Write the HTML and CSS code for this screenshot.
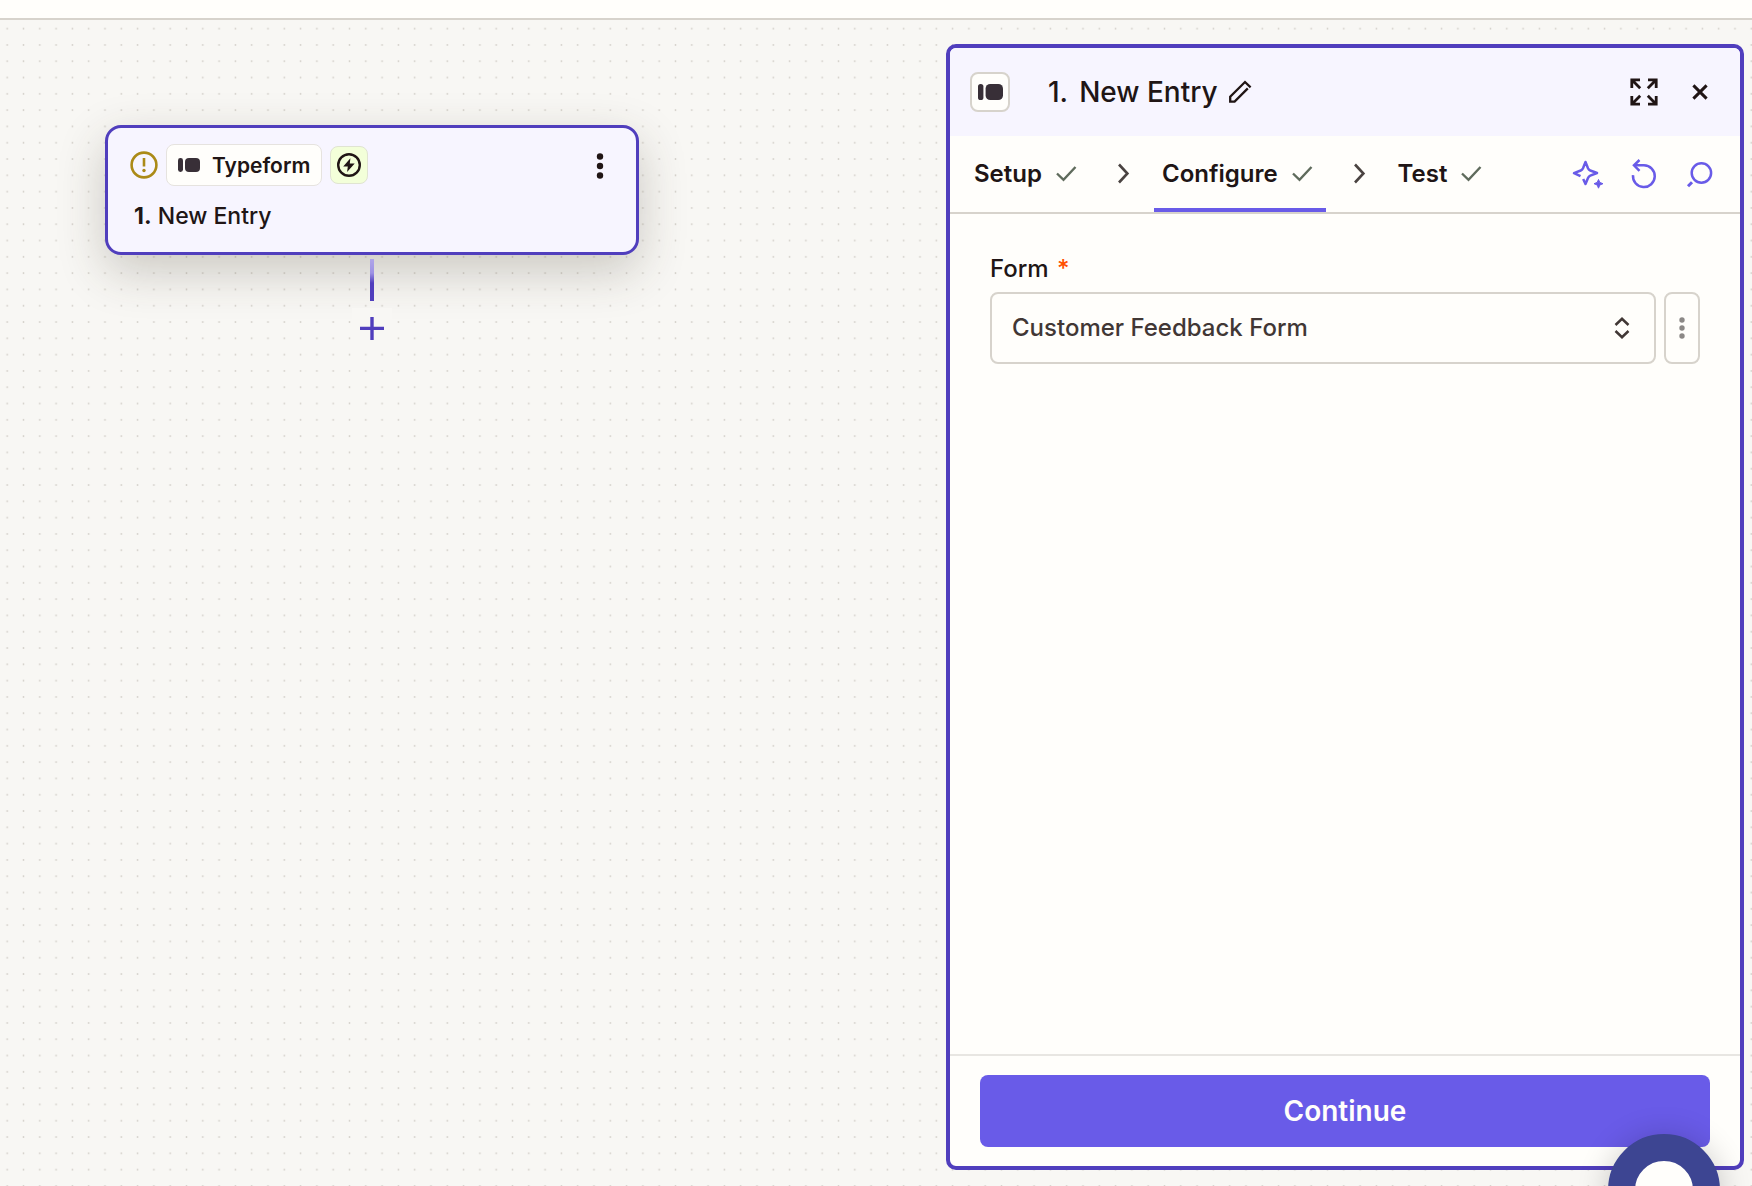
FILE: index.html
```html
<!DOCTYPE html>
<html lang="en">
<head>
  <meta charset="UTF-8">
  <meta name="viewport" content="width=device-width, initial-scale=1.0">
  <title>New Entry</title>
  <link rel="stylesheet" href="styles.css">
</head>
<body>

  <header class="topbar"></header>

  <main class="editor">
    <svg class="dots" aria-hidden="true">
      <pattern id="dot-grid" width="16.3" height="16.3" patternUnits="userSpaceOnUse">
        <circle cx="7.2" cy="8.6" r="0.9" fill="#d3d0ca"/>
      </pattern>
      <rect width="100%" height="100%" fill="url(#dot-grid)"/>
    </svg>

    <section class="canvas">
      <div class="flow">
        <article class="step">
          <div class="step-top">
            <svg class="icon-alert" viewBox="0 0 28 28" fill="none" stroke="#ab8a17" stroke-width="2.6">
              <circle cx="14" cy="14" r="12.4"/>
              <path d="M14 7v8.5"/>
              <circle cx="14" cy="19.5" r="1.7" fill="#ab8a17" stroke="none"/>
            </svg>
            <span class="app">
              <svg class="app-logo" viewBox="0 0 22 14" fill="#382f37">
                <rect x="0" y="0" width="5" height="14" rx="2.4"/>
                <rect x="7" y="0" width="15" height="14" rx="4"/>
              </svg>
              Typeform
            </span>
            <span class="trigger">
              <svg class="icon-bolt" viewBox="0 0 24 24">
                <circle cx="12" cy="12" r="10.8" fill="none" stroke="#201515" stroke-width="2.4"/>
                <path d="M13.4 5.2 6.2 13.6h4.6l-.7 5.4 7.6-8.4h-4.9z" fill="#201515"/>
              </svg>
            </span>
            <button class="step-menu" type="button" aria-label="Step menu">
              <svg class="icon-more" viewBox="0 0 8 26" fill="#201515">
                <circle cx="4" cy="3.5" r="3.2"/>
                <circle cx="4" cy="13" r="3.2"/>
                <circle cx="4" cy="22.5" r="3.2"/>
              </svg>
            </button>
          </div>
          <p class="step-name"><b>1.</b> New Entry</p>
        </article>
        <div class="connector"></div>
        <button class="add-step" type="button" aria-label="Add step">
          <svg class="icon-plus" viewBox="0 0 24 24" stroke="#503ebd" stroke-width="3.4">
            <path d="M12 1v23M0 12.4h24"/>
          </svg>
        </button>
      </div>
    </section>

    <aside class="panel">
      <header class="panel-head">
        <span class="panel-app">
          <svg class="panel-logo" viewBox="0 0 25 16" fill="#382f37">
            <rect x="0" y="0" width="5.4" height="16" rx="2.6"/>
            <rect x="7.6" y="0" width="17.4" height="16" rx="4.6"/>
          </svg>
        </span>
        <h1><span>1.</span> <span>New Entry</span></h1>
        <button class="icon-btn rename" type="button" aria-label="Rename">
          <svg class="icon" viewBox="0 0 32 32" fill="none" stroke="#201515" stroke-width="2.3">
            <path d="M23.8 12.4 10.6 25.6H6.2v-4.8L21 6l5.6 5.4"/>
          </svg>
        </button>
        <div class="tools">
          <button class="icon-btn" type="button" aria-label="Expand">
            <svg class="icon" viewBox="0 0 32 32" fill="none" stroke="#201515" stroke-width="2.8">
              <path d="M3.8 12V3.8H12M3.800 3.800l8.400 8.400M20 3.800h8.200V12M28.200 3.800l-8.400 8.400M3.800 20v8.200H12M3.800 28.200l8.400-8.400M28.200 20v8.200H20M28.200 28.200l-8.400-8.400"/>
            </svg>
          </button>
          <button class="icon-btn" type="button" aria-label="Close">
            <svg class="icon" viewBox="0 0 32 32" fill="none" stroke="#201515" stroke-width="3">
              <path d="M9.400 9.400l13.200 13.200M22.600 9.400 9.400 22.600"/>
            </svg>
          </button>
        </div>
      </header>

      <div class="tabbar">
        <nav class="tabs">
          <button class="tab" type="button">Setup
            <svg class="icon" viewBox="0 0 32 32" fill="none" stroke="#5f6b5c" stroke-width="2.4"><path d="M7 16.5l6.500 6.300L25.500 10"/></svg>
          </button>
          <svg class="sep" viewBox="0 0 32 32" fill="none" stroke="#4a4341" stroke-width="2.6"><path d="M13 6.500l8.400 9-8.400 9"/></svg>
          <button class="tab active" type="button">Configure
            <svg class="icon" viewBox="0 0 32 32" fill="none" stroke="#5f6b5c" stroke-width="2.4"><path d="M7 16.5l6.500 6.300L25.500 10"/></svg>
          </button>
          <svg class="sep" viewBox="0 0 32 32" fill="none" stroke="#4a4341" stroke-width="2.6"><path d="M13 6.500l8.400 9-8.400 9"/></svg>
          <button class="tab" type="button">Test
            <svg class="icon" viewBox="0 0 32 32" fill="none" stroke="#5f6b5c" stroke-width="2.4"><path d="M7 16.5l6.500 6.300L25.500 10"/></svg>
          </button>
        </nav>
        <div class="tools">
          <button class="icon-btn" type="button" aria-label="Copilot">
            <svg class="icon" viewBox="0 0 32 32" fill="none" stroke="#695be8" stroke-width="2.5" stroke-linejoin="round">
              <path d="M8.500 18.200 2 15.200l6.700-2.700q1.600-.7 2.300-2.300L13.500 4l2.500 6.200q.7 1.600 2.300 2.300l6.700 2.500-6.700 2.700q-1.600.7-2.300 2.300L13.500 26l-2.300-5"/>
              <path d="M26.500 21.500l1.300 2.900 3.200 1.300-3.200 1.300-1.300 3.200-1.300-3.200-3.200-1.300 3.200-1.300z" fill="#695be8" stroke="#695be8" stroke-width="1"/>
            </svg>
          </button>
          <button class="icon-btn" type="button" aria-label="Reset">
            <svg class="icon" viewBox="0 0 32 32" fill="none" stroke="#695be8" stroke-width="2.5">
              <path d="M5 17.200A10.900 10.900 0 1 0 15.900 7.300H6.500"/>
              <path d="M11.500 2 6 7.300l5.500 5.500"/>
            </svg>
          </button>
          <button class="icon-btn" type="button" aria-label="Search">
            <svg class="icon" viewBox="0 0 32 32" fill="none" stroke="#695be8" stroke-width="2.500">
              <circle cx="17.400" cy="15" r="9.700"/>
              <path d="M8 24.200l-4 4" stroke-width="3"/>
            </svg>
          </button>
        </div>
      </div>

      <form class="panel-body">
        <label for="form-select">Form <span class="required">*</span></label>
        <div class="field">
          <div class="select-wrap">
            <select id="form-select">
              <option>Customer Feedback Form</option>
            </select>
            <svg class="select-icon" viewBox="0 0 16 24" fill="none" stroke="#413735" stroke-width="2.5">
              <path d="M1.500 9 8 2.800 14.500 9M1.500 15 8 21.200 14.500 15"/>
            </svg>
          </div>
          <button class="field-menu" type="button" aria-label="Field options">
            <svg class="icon-more" viewBox="0 0 8 26" fill="#8b8886">
              <circle cx="4" cy="5" r="2.700"/>
              <circle cx="4" cy="13" r="2.700"/>
              <circle cx="4" cy="21" r="2.700"/>
            </svg>
          </button>
        </div>
      </form>

      <footer class="panel-foot">
        <button class="continue" type="button">Continue</button>
      </footer>
    </aside>
  </main>

  <button class="chat" type="button" aria-label="Help"></button>

</body>
</html>
```

FILE: styles.css
```css
* {
  box-sizing: border-box;
}
body {
  margin: 0;
  height: 100vh;
  overflow: hidden;
  display: flex;
  flex-direction: column;
  background-color: #f8f7f4;
  color: #201515;
  font-family: Inter, "Liberation Sans", sans-serif;
  font-size: 24px;
}
button {
  padding: 0;
  border: none;
  background: none;
  color: inherit;
  font: inherit;
  cursor: pointer;
}
svg {
  display: block;
  flex: none;
}

.topbar {
  flex: none;
  height: 20px;
  background-color: #fffefb;
  border-bottom: 2px solid #d7d3cc;
}
.editor {
  position: relative;
  flex: 1;
  display: flex;
  min-height: 0;
}
.dots {
  position: absolute;
  width: 100%;
  height: 100%;
}

/* canvas */
.canvas {
  position: relative;
  flex: 1;
  padding: 105px 0 0 105px;
}
.flow {
  display: flex;
  flex-direction: column;
  align-items: center;
  width: 534px;
}
.step {
  width: 100%;
  height: 130px;
  padding: 16px 22px;
  background-color: #f7f5ff;
  border: 3px solid #503ebd;
  border-radius: 16px;
  box-shadow: 0 16px 48px rgba(60, 50, 35, 0.24);
}
.step-top {
  display: flex;
  align-items: center;
  gap: 8px;
  height: 42px;
}
.icon-alert {
  width: 28px;
  height: 28px;
}
.app {
  display: flex;
  align-items: center;
  gap: 12px;
  height: 42px;
  padding: 0 11px;
  background-color: #fffefb;
  border: 1px solid #e6e3df;
  border-radius: 8px;
  font-size: 21px;
  font-weight: 600;
}
.app-logo {
  width: 22px;
  height: 14px;
}
.trigger {
  display: flex;
  align-items: center;
  justify-content: center;
  width: 38px;
  height: 38px;
  background-color: #f3ffd9;
  border: 1px solid #e0e4d2;
  border-radius: 8px;
}
.icon-bolt {
  width: 24px;
  height: 24px;
}
.step-menu {
  display: flex;
  justify-content: center;
  width: 28px;
  margin-left: auto;
  padding-top: 2px;
}
.icon-more {
  width: 8px;
  height: 26px;
}
.step-name {
  margin: 14px 4px 0;
  font-size: 23px;
  font-weight: 500;
  line-height: 32px;
}
.step-name b {
  font-weight: 700;
}
.connector {
  width: 4px;
  height: 42px;
  margin-top: 4px;
  background: linear-gradient(#b0a6e8, #9d92e4 14px, #503ebd 24px);
}
.add-step {
  display: flex;
  align-items: center;
  justify-content: center;
  width: 40px;
  height: 40px;
  margin-top: 7px;
  background-color: #f8f7f4;
}
.icon-plus {
  width: 24px;
  height: 24px;
}

/* side panel */
.panel {
  position: relative;
  flex: none;
  display: flex;
  flex-direction: column;
  width: 798px;
  margin: 24px 8px 16px 0;
  background-color: #fffefb;
  border: 4px solid #503ebd;
  border-radius: 10px;
}
.panel-head {
  display: flex;
  align-items: center;
  height: 88px;
  padding: 0 24px 0 20px;
  background-color: #f7f5ff;
  border-radius: 6px 6px 0 0;
}
.panel-app {
  display: flex;
  align-items: center;
  justify-content: center;
  width: 40px;
  height: 40px;
  background-color: #fffefb;
  border: 2px solid #d7d3cc;
  border-radius: 8px;
}
.panel-logo {
  width: 25px;
  height: 16px;
}
h1 {
  display: flex;
  gap: 11px;
  margin: 0 0 0 38px;
  font-size: 28px;
  font-weight: 500;
  line-height: 36px;
}
.rename {
  margin-left: 6px;
}
.icon-btn,
.icon {
  width: 32px;
  height: 32px;
}
.tools {
  display: flex;
  gap: 24px;
  margin-left: auto;
}
.tabbar {
  display: flex;
  align-items: center;
  height: 78px;
  padding: 0 24px 0 16px;
  border-bottom: 2px solid #d7d3cc;
}
.tabs {
  display: flex;
  align-items: center;
  height: 100%;
}
.tab {
  display: flex;
  align-items: center;
  gap: 8px;
  height: 100%;
  padding: 2px 8px 0;
  border-bottom: 4px solid transparent;
  font-weight: 600;
}
.tab.active {
  border-bottom-color: #695be8;
}
.sep {
  width: 32px;
  height: 32px;
  margin: 0 16px;
}
.panel-body {
  flex: 1;
  padding: 39px 40px;
}
label {
  display: block;
  font-weight: 500;
  line-height: 32px;
}
.required {
  margin-left: 2px;
  color: #ff4f00;
}
.field {
  display: flex;
  gap: 8px;
  margin-top: 7px;
}
.select-wrap {
  position: relative;
  flex: 1;
}
select {
  width: 100%;
  height: 72px;
  padding: 0 60px 2px 20px;
  appearance: none;
  background-color: #fffefb;
  border: 2px solid #d7d3cc;
  border-radius: 8px;
  color: #413735;
  font: inherit;
  font-weight: 500;
}
.select-icon {
  position: absolute;
  top: 24px;
  right: 26px;
  width: 16px;
  height: 24px;
  pointer-events: none;
}
.field-menu {
  display: flex;
  align-items: center;
  justify-content: center;
  width: 36px;
  border: 2px solid #d7d3cc;
  border-radius: 8px;
}
.panel-foot {
  padding: 19px 30px;
  border-top: 2px solid #e8e6e2;
}
.continue {
  width: 100%;
  height: 72px;
  display: block;
  background-color: #695be8;
  border-radius: 8px;
  color: #fffefb;
  font-size: 28px;
  font-weight: 600;
}

/* help bubble, half below the window edge */
.chat {
  position: fixed;
  right: 32px;
  bottom: -60px;
  width: 112px;
  height: 112px;
  background-color: #fffefb;
  border: 27px solid #3d4592;
  border-radius: 50%;
  box-shadow: 0 2px 32px rgba(0, 0, 0, 0.2);
}
```
